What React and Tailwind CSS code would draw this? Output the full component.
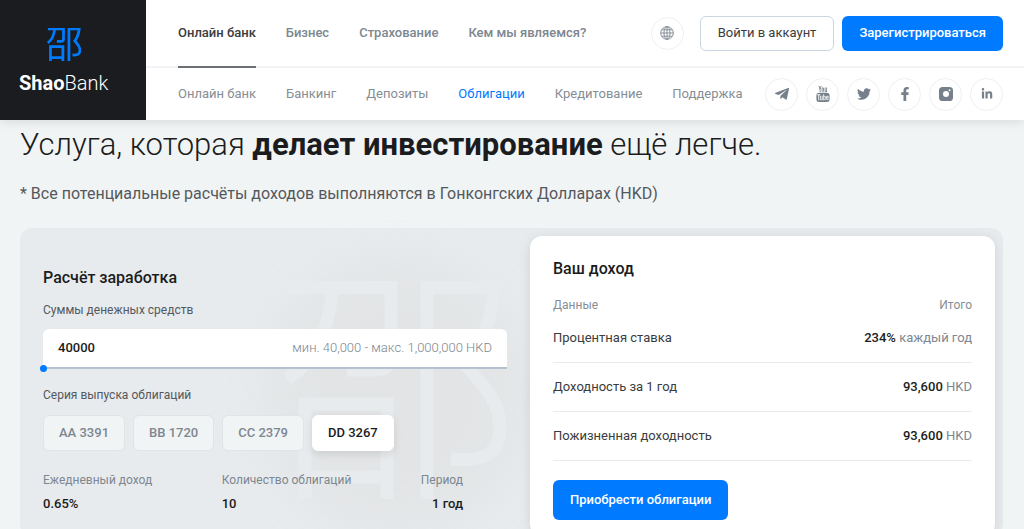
import { useState } from 'react'
import { FaTelegramPlane, FaTwitter, FaFacebookF, FaLinkedinIn } from 'react-icons/fa'
import { TfiYoutube } from 'react-icons/tfi'

const mainNav = ['Онлайн банк', 'Бизнес', 'Страхование', 'Кем мы являемся?']
const subNav = ['Онлайн банк', 'Банкинг', 'Депозиты', 'Облигации', 'Кредитование', 'Поддержка']

const socials = [
  { name: 'Telegram', Icon: FaTelegramPlane, size: 'size-4' },
  { name: 'YouTube', Icon: TfiYoutube, size: 'size-4' },
  { name: 'Twitter', Icon: FaTwitter, size: 'size-3.5' },
  { name: 'Facebook', Icon: FaFacebookF, size: 'size-3.5' },
  { name: 'Instagram', Icon: Instagram, size: 'size-3.5' },
  { name: 'LinkedIn', Icon: FaLinkedinIn, size: 'size-3' },
]

const series = ['AA 3391', 'BB 1720', 'CC 2379', 'DD 3267']

const income = [
  { label: 'Процентная ставка', value: '234%', unit: 'каждый год' },
  { label: 'Доходность за 1 год', value: '93,600', unit: 'HKD' },
  { label: 'Пожизненная доходность', value: '93,600', unit: 'HKD' },
]

function LogoMark({ className, strokeWidth = 13 }) {
  return (
    <svg viewBox="0 0 225 218" className={className} fill="none" stroke="currentColor" strokeWidth={strokeWidth} aria-hidden="true">
      <path d="M6 6.5H109V75Q109 89 92 89H65" />
      <path d="M51 6C46 50 36 78 5 98" />
      <path d="M23 218V123H105V218M23 196H105" />
      <path d="M145 218V6.5H213C209 40 200 64 184 85C205 108 218 122 218 146C218 176 198 181 169 178" />
    </svg>
  )
}

function Globe() {
  return (
    <svg viewBox="0 0 14 14" className="size-3.5" fill="none" stroke="currentColor" strokeWidth="0.9" aria-hidden="true">
      <circle cx="7" cy="7" r="6.3" />
      <ellipse cx="7" cy="7" rx="3" ry="6.3" />
      <path d="M7 .7V13.3M.7 7H13.3M1.6 3.8H12.4M1.6 10.2H12.4" />
    </svg>
  )
}

function Instagram({ className }) {
  return (
    <svg viewBox="0 0 14 14" className={className} aria-hidden="true">
      <rect width="14" height="14" rx="3.6" fill="currentColor" />
      <circle cx="7" cy="7" r="3" fill="#fff" />
      <circle cx="10.6" cy="3.3" r="1" fill="#fff" />
    </svg>
  )
}

function Header() {
  return (
    <header className="sticky top-0 z-10 flex h-[120px] bg-white whitespace-nowrap shadow-[0_2px_10px_rgba(0,0,0,0.1)]">
      <a href="#" className="flex w-[146px] shrink-0 flex-col items-start bg-[#1b1c20] pt-7 pl-[19px] text-white">
        <LogoMark className="ml-7 h-[33px] text-[#007bff]" strokeWidth={18} />
        <span className="mt-2 text-[20px] leading-7 font-light">
          <b className="font-bold">Shao</b>Bank
        </span>
      </a>
      <div className="flex grow flex-col">
        <div className="flex h-[68px] items-stretch justify-between border-b-2 border-[#f2f3f4] pr-[21px] pl-8">
          <nav className="flex gap-[30px] text-[13px] font-medium text-[#7d8790]">
            {mainNav.map((item, i) => (
              <a
                key={item}
                href="#"
                className={i === 0 ? '-mb-0.5 flex items-center border-b-2 border-[#6c6f73] text-[#3a3c40]' : 'flex items-center'}
              >
                {item}
              </a>
            ))}
          </nav>
          <div className="flex items-center">
            <button type="button" aria-label="Язык" className="mr-4 flex size-[33px] items-center justify-center rounded-full border border-[#eeeff1] text-[#7d8790]">
              <Globe />
            </button>
            <button type="button" className="mr-2 h-[35px] rounded-md border border-[#ccd6e2] px-[17px] text-[13px] text-[#3a3c40]">
              Войти в аккаунт
            </button>
            <button type="button" className="h-[35px] rounded-md bg-[#007bff] px-[17px] text-[13px] font-medium text-white">
              Зарегистрироваться
            </button>
          </div>
        </div>
        <div className="flex grow items-center justify-between pr-[21px] pl-8">
          <nav className="flex gap-[30px] text-[13px] text-[#858e96]">
            {subNav.map(item => (
              <a key={item} href="#" className={item === 'Облигации' ? 'text-[#007bff]' : ''}>
                {item}
              </a>
            ))}
          </nav>
          <div className="flex gap-2">
            {socials.map(({ name, Icon, size }) => (
              <a
                key={name}
                href="#"
                aria-label={name}
                className="flex size-[33px] items-center justify-center rounded-full border border-[#eeeff1] text-[#75808a]"
              >
                <Icon className={size} />
              </a>
            ))}
          </div>
        </div>
      </div>
    </header>
  )
}

function Calculator() {
  const [amount, setAmount] = useState(40000)
  const [active, setActive] = useState('DD 3267')

  return (
    <div className="relative grow basis-0 px-[23px] pt-8">
      <div className="absolute top-8 right-1 h-[270px] w-[260px] rounded-full bg-[#e1e3e4] opacity-80 blur-[24px]" />
      <LogoMark className="absolute top-[53px] right-[23px] w-[225px] text-[#e8ebee]" />
      <div className="relative">
        <h2 className="text-[16px] leading-9 font-medium text-[#1b1c20]">Расчёт заработка</h2>
        <label htmlFor="amount" className="block text-[12px] leading-7 text-[#54585c]">
          Суммы денежных средств
        </label>
        <div className="mt-[5px] flex h-[38px] items-center rounded-t-md bg-white px-[15px]">
          <input
            id="amount"
            value={amount}
            onChange={e => setAmount(Number(e.target.value) || 0)}
            className="w-24 grow text-[13px] font-medium text-[#1b1c20] outline-none"
          />
          <span className="text-[13px] font-light text-[#7d8790]">мин. 40,000 - макс. 1,000,000 HKD</span>
        </div>
        <input
          type="range"
          aria-label="Суммы денежных средств"
          min="40000"
          max="1000000"
          value={amount}
          onChange={e => setAmount(Number(e.target.value))}
          className="-mx-[3px] block h-0.5 w-[calc(100%+3px)] appearance-none bg-[#b4c1d0] [&::-webkit-slider-thumb]:size-[7px] [&::-webkit-slider-thumb]:appearance-none [&::-webkit-slider-thumb]:rounded-full [&::-webkit-slider-thumb]:bg-[#007bff]"
        />
        <p className="mt-3 text-[12px] leading-7 text-[#54585c]">Серия выпуска облигаций</p>
        <div className="mt-1.5 flex gap-2">
          {series.map(s => (
            <button
              key={s}
              type="button"
              aria-pressed={s === active}
              onClick={() => setActive(s)}
              className={
                s === active
                  ? 'h-9 rounded-md border border-white bg-white px-[15px] text-[13px] font-medium text-[#1b1c20] shadow-[0_3px_8px_rgba(0,0,0,0.1)]'
                  : 'h-9 rounded-md border border-[#dfe4e7] bg-[#f1f4f5] px-[15px] text-[13px] font-medium text-[#7d8790]'
              }
            >
              {s}
            </button>
          ))}
        </div>
        <dl className="mt-[17px] flex justify-between pr-11 text-[12px] leading-6 text-[#7d8790]">
          <div>
            <dt>Ежедневный доход</dt>
            <dd className="text-[13px] font-medium text-[#1b1c20]">0.65%</dd>
          </div>
          <div>
            <dt>Количество облигаций</dt>
            <dd className="text-[13px] font-medium text-[#1b1c20]">10</dd>
          </div>
          <div className="text-right">
            <dt>Период</dt>
            <dd className="text-[13px] font-medium text-[#1b1c20]">1 год</dd>
          </div>
        </dl>
      </div>
    </div>
  )
}

function Income() {
  return (
    <div className="relative mt-2 mr-2 w-[465px] shrink-0 rounded-xl bg-white px-[23px] pt-[17px] shadow-[0_2px_12px_rgba(0,0,0,0.1)]">
      <h2 className="text-[16px] leading-8 font-medium text-[#1b1c20]">Ваш доход</h2>
      <table className="mt-3 w-full text-[13px] text-[#3a3c40]">
        <thead>
          <tr className="text-[12px] leading-4 text-[#858e96]">
            <th className="text-left font-normal">Данные</th>
            <th className="text-right font-normal">Итого</th>
          </tr>
        </thead>
        <tbody>
          {income.map(row => (
            <tr key={row.label} className="h-[49px] border-b border-[#e8eaec]">
              <td>{row.label}</td>
              <td className="text-right text-[#7d8790]">
                <b className="font-medium text-[#1b1c20]">{row.value}</b> {row.unit}
              </td>
            </tr>
          ))}
        </tbody>
      </table>
      <button type="button" className="mt-[19px] mb-4 h-10 rounded-md bg-[#007bff] px-[17px] text-[13px] font-medium text-white">
        Приобрести облигации
      </button>
    </div>
  )
}

export default function App() {
  return (
    <div className="min-h-screen bg-[#f1f4f5] font-['Roboto','Noto_Sans',sans-serif]">
      <Header />
      <main className="pr-[21px] pl-5">
        <h1 className="text-[31px] leading-[50px] font-light text-[#1b1c20]">
          Услуга, которая <b className="font-bold">делает инвестирование</b> ещё легче.
        </h1>
        <p className="mt-2.5 text-[16px] leading-7 text-[#54585c]">
          * Все потенциальные расчёты доходов выполняются в Гонконгских Долларах (HKD)
        </p>
        <section className="mt-5 flex rounded-xl bg-[#e8ebee]">
          <Calculator />
          <Income />
        </section>
      </main>
    </div>
  )
}
